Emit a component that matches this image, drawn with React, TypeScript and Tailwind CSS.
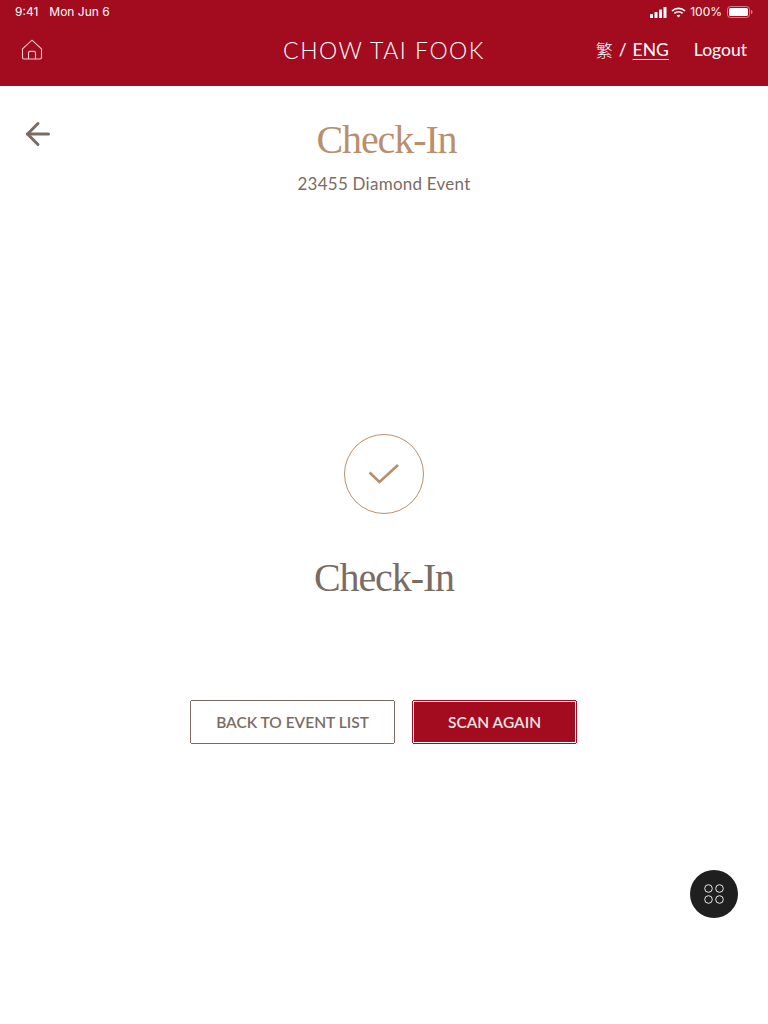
import { ArrowLeft } from "lucide-react";

const sans = "font-['Lato','Liberation_Sans',sans-serif]";
const serif = "font-['Liberation_Serif',serif]";

function StatusBar() {
  return (
    <div className={`flex h-6 items-center justify-between pl-[15px] pr-[15px] text-[12px] text-white font-['Inter',sans-serif]`}>
      <div className="flex gap-[11px]">
        <span>9:41</span>
        <span>Mon Jun 6</span>
      </div>
      <div className="flex items-center gap-[4px]">
        <svg width="17" height="11" viewBox="0 0 17 11" fill="white">
          <rect x="0" y="7" width="3" height="4" rx="0.5" />
          <rect x="4.5" y="5" width="3" height="6" rx="0.5" />
          <rect x="9" y="2.5" width="3" height="8.5" rx="0.5" />
          <rect x="13.5" y="0" width="3" height="11" rx="0.5" />
        </svg>
        <svg width="15" height="11" viewBox="0 0 15 11" fill="none" stroke="white" strokeWidth="1.7">
          <path d="M1 4 C4.6 .6 10.4 .6 14 4" />
          <path d="M3.4 6.3 C5.7 4.2 9.3 4.2 11.6 6.3" />
          <path d="M7.5 10.6 L5.6 8.5 C6.7 7.6 8.3 7.6 9.4 8.5 Z" fill="white" stroke="none" />
        </svg>
        <span>100%</span>
        <svg width="26" height="12" viewBox="0 0 26 12" fill="none" className="ml-[1px]">
          <rect x="0.5" y="0.5" width="22" height="11" rx="3" stroke="white" strokeOpacity="0.45" />
          <rect x="2" y="2" width="19" height="8" rx="1.6" fill="white" />
          <path d="M24 4 C25 4.4 25.5 5.2 25.5 6 C25.5 6.8 25 7.6 24 8 Z" fill="white" fillOpacity="0.5" />
        </svg>
      </div>
    </div>
  );
}

function Header() {
  return (
    <header className={`h-[86px] bg-[#a20c1e] ${sans}`}>
      <StatusBar />
      <div className="grid h-[52px] grid-cols-[1fr_auto_1fr] items-center pl-[21px] pr-[21px] text-white">
        <svg width="22" height="22" viewBox="0 0 22 22" fill="none" stroke="#f0ccd0" strokeWidth="1.1" strokeLinejoin="round">
          <path d="M1.5 9.8 L11 1.2 L20.5 9.8 V18.5 Q20.5 20 19 20 H3 Q1.5 20 1.5 18.5 Z" />
          <path d="M7.5 20 V14 Q7.5 12.4 9 12.4 H13 Q14.5 12.4 14.5 14 V20" />
        </svg>
        <div className="text-[23px] font-light leading-none tracking-[1.5px]">CHOW TAI FOOK</div>
        <div className="flex items-center justify-end pb-[1px] text-[17.5px] leading-none">
          <span className="font-['Noto_Sans_CJK_TC',sans-serif] text-[17px] font-light">繁</span>
          <span className="ml-[6px]">/</span>
          <span className="ml-[6px] underline underline-offset-[3px] decoration-1">ENG</span>
          <span className="ml-[25px]">Logout</span>
        </div>
      </div>
    </header>
  );
}

function Frame({ color, children, width }: { color: string; children: React.ReactNode; width: string }) {
  // corners of the outline are left open, as in the design
  return (
    <div className={`mx-[1px] border-y ${color} ${width}`}>
      <div className={`-mx-[1px] h-[42px] border-x ${color}`}>{children}</div>
    </div>
  );
}

export default function App() {
  return (
    <div className={`relative min-h-[1024px] bg-white ${sans}`}>
      <Header />
      <main>
        <div className="relative flex flex-col items-center pt-[30px]">
          <button className="absolute left-[20px] top-[30px] text-[#7b6c63]">
            <ArrowLeft size={36} strokeWidth={2} />
          </button>
          <h1 className={`ml-[5px] text-[40px] leading-[48px] tracking-[-1.1px] text-[#b98f6e] ${serif}`}>Check-In</h1>
          <p className="mt-[10px] text-[17px] leading-[20px] tracking-[0.25px] text-[#7b6c63]">23455 Diamond Event</p>
        </div>

        <div className="mt-[240px] flex flex-col items-center">
          <div className="flex h-20 w-20 items-center justify-center rounded-full border border-[#b98f6e]">
            <svg width="32" height="22" viewBox="0 0 32 22" fill="none" stroke="#b98f6e" strokeWidth="2.7">
              <path d="M1.5 9.5 L11.5 19 L30 2" />
            </svg>
          </div>
          <h2 className={`mt-[40px] text-[40px] leading-[48px] tracking-[-1.1px] text-[#7b6c63] ${serif}`}>Check-In</h2>
        </div>

        <div className="mt-[98px] flex justify-center gap-[17px] pr-[1px]">
          <Frame color="border-[#7b6c63]" width="w-[203px]">
            <button className="flex h-full w-full items-center justify-center pt-[1px] text-[15.5px] font-semibold text-[#7b6c63]">
              BACK TO EVENT LIST
            </button>
          </Frame>
          <Frame color="border-[#a20c1e]" width="w-[163px]">
            <div className="h-full p-[1px]">
              <button className="flex h-full w-full items-center justify-center bg-[#a20c1e] pt-[1px] text-[15.5px] font-semibold text-[#f3e3e3]">
                SCAN AGAIN
              </button>
            </div>
          </Frame>
        </div>
      </main>

      <button className="absolute left-[690px] top-[870px] flex h-12 w-12 items-center justify-center rounded-full bg-[#1f1f1f]">
        <svg width="22" height="22" viewBox="0 0 22 22" fill="none" stroke="#e8e8e8" strokeWidth="1">
          <circle cx="5.5" cy="5.5" r="3.8" />
          <circle cx="16.5" cy="5.5" r="3.8" />
          <circle cx="5.5" cy="16.5" r="3.8" />
          <circle cx="16.5" cy="16.5" r="3.8" />
        </svg>
      </button>
    </div>
  );
}
